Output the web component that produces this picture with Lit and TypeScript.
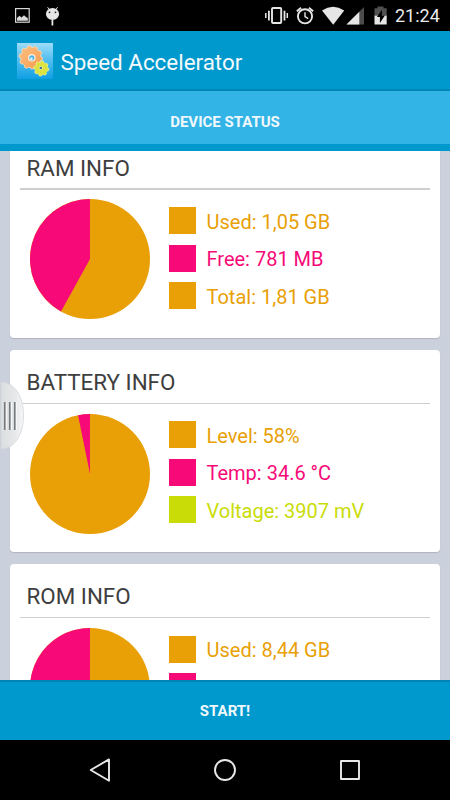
import { LitElement, html, css, svg } from "lit";
import { customElement, property } from "lit/decorators.js";

const ORANGE = "#e99f06";
const PINK = "#f70a78";
const LIME = "#c9dc07";

interface Row { color: string; text: string }
interface Card { title: string; base: string; slice: string; from: number; rows: Row[] }

const CARDS: Card[] = [
  { title: "RAM INFO", base: ORANGE, slice: PINK, from: 208.9, rows: [
    { color: ORANGE, text: "Used: 1,05 GB" },
    { color: PINK, text: "Free: 781 MB" },
    { color: ORANGE, text: "Total: 1,81 GB" } ] },
  { title: "BATTERY INFO", base: ORANGE, slice: PINK, from: 348.5, rows: [
    { color: ORANGE, text: "Level: 58%" },
    { color: PINK, text: "Temp: 34.6 °C" },
    { color: LIME, text: "Voltage: 3907 mV" } ] },
  { title: "ROM INFO", base: ORANGE, slice: PINK, from: 240, rows: [
    { color: ORANGE, text: "Used: 8,44 GB" },
    { color: PINK, text: "Free: 3,99 GB" } ] },
];

@customElement("info-card")
export class InfoCard extends LitElement {
  @property({ attribute: false }) card!: Card;

  static styles = css`
    :host { display: block; height: 202.8px; background: #fff; border-radius: 4px;
      box-shadow: 0 1px 1px rgba(120, 120, 120, .3); box-sizing: border-box; padding: 0 10px; }
    .title { height: 53px; box-sizing: border-box; padding: 15.4px 0 0 6.5px; line-height: 34px;
      font-size: 22.4px; color: #3e3e3e; white-space: nowrap; }
    .rule { height: 1.5px; background: #cfcfcf; }
    .body { display: flex; padding: 9.6px 0 0 10px; }
    .pie { width: 120px; height: 120px; display: block; flex: none; }
    .legend { display: flex; flex-direction: column; gap: 10.4px; padding: 7.7px 0 0 19px; }
    .row { display: flex; align-items: center; height: 27.1px; gap: 10.5px;
      font-size: 20px; line-height: 27px; white-space: nowrap; }
    .label { padding-top: 3px; }
    .swatch { width: 27px; height: 27px; flex: none; }
  `;

  render() {
    const c = this.card;
    const a = (c.from * Math.PI) / 180;
    const x = 60 + 60 * Math.sin(a);
    const y = 60 - 60 * Math.cos(a);
    return html`
      <div class="title">${c.title}</div>
      <div class="rule"></div>
      <div class="body">
        <svg class="pie" viewBox="0 0 120 120">
          <circle cx="60" cy="60" r="60" fill=${c.base} />
          <path d="M60 60L${x} ${y}A60 60 0 0 1 60 0Z" fill=${c.slice} />
        </svg>
        <div class="legend">
          ${c.rows.map((r) => html`<div class="row" style="color:${r.color}">
            <div class="swatch" style="background:${r.color}"></div><span class="label">${r.text}</span></div>`)}
        </div>
      </div>`;
  }
}

function gear(cx: number, cy: number, r: number, n: number, tooth: number) {
  const pts: string[] = [];
  const step = (Math.PI * 2) / n;
  const at = (rad: number, a: number) => `${(cx + rad * Math.cos(a)).toFixed(2)} ${(cy + rad * Math.sin(a)).toFixed(2)}`;
  for (let i = 0; i < n; i++) {
    const a = i * step + 0.15;
    pts.push(at(r, a - step * 0.3), at(r + tooth, a - step * 0.2), at(r + tooth, a + step * 0.2), at(r, a + step * 0.3));
  }
  return "M" + pts.join("L") + "Z";
}

@customElement("app-root")
export class AppRoot extends LitElement {
  static styles = css`
    :host { display: flex; flex-direction: column; position: relative; width: 450px; height: 800px;
      overflow: hidden; font-family: Roboto, "Noto Sans", sans-serif; background: #000; }
    svg { display: block; flex: none; }
    .status { height: 31px; flex: none; background: #000; display: flex; }
    .clock { color: #ececec; font-size: 18px; line-height: 32px; margin-left: 4px; white-space: nowrap; }
    .bar { height: 60px; flex: none; box-sizing: border-box; background: #0099cd; display: flex; align-items: center;
      padding: 1px 0 0 17px; gap: 7.5px; border-bottom: 2px solid #0087b5; color: #f5fafc;
      font-size: 22.4px; white-space: nowrap; }
    .app-title { line-height: 30px; padding-top: 2px; }
    .tab { height: 60px; flex: none; box-sizing: border-box; background: #33b4e6; border-bottom: 7px solid #0099cd;
      color: #f0f8fc; font-size: 15px; font-weight: 700; text-align: center; line-height: 63px; }
    .list { height: 529px; flex: none; overflow: hidden; background: #cbd0dd; }
    .cards { display: flex; flex-direction: column; gap: 11.4px; margin: -15.7px 10px 0; }
    .start { height: 60px; flex: none; box-sizing: border-box; background: #0099cd; border-top: 2px solid #0083b5;
      color: #f0f8fc; font-size: 15px; font-weight: 700; text-align: center; line-height: 58px; }
    .nav { height: 60px; flex: none; background: #000; }
    .handle { position: absolute; left: 0; top: 381px; }
  `;

  render() {
    const big = gear(13.8, 14.4, 10.2, 10, 1.5);
    const small = gear(24.3, 25.5, 6.4, 8, 1.2);
    return html`
      <div class="status">
        <svg width="391" height="31" viewBox="0 0 391 31">
          <rect x="15.6" y="8.6" width="13.6" height="13.6" fill="none" stroke="#d8d8d8" stroke-width="1.2" />
          <path d="M17 20.7V18l2.5-2.2 2 1.6 2.5-2.2 2 1.8 1.8 1v2.7z" fill="#d8d8d8" />
          <path d="M47.6 7.2l2.2 3M57.6 7.2l-2.2 3" stroke="#e6e6e6" stroke-width="1" />
          <ellipse cx="52.5" cy="14" rx="6.6" ry="6" fill="#e6e6e6" />
          <circle cx="49.5" cy="12.3" r=".9" fill="#222" /><circle cx="55.5" cy="12.3" r=".9" fill="#222" />
          <path d="M52.4 20v5.5" stroke="#e6e6e6" stroke-width="1.8" />
          <g fill="none" stroke="#e6e6e6">
            <rect x="272" y="8" width="9.2" height="15" rx="1" stroke-width="1.9" />
            <path d="M268.9 10.8v9.6M284.5 10.8v9.6" stroke-width="1.8" />
            <path d="M265.8 13v5M287.3 13v5" stroke-width="1.5" />
            <circle cx="305" cy="16.3" r="7.1" stroke-width="1.9" />
            <path d="M305 12.2v4.5l3.2 2" stroke-width="1.4" />
            <path d="M296.8 11.2l4.3-3.5M313.2 11.2l-4.3-3.5" stroke-width="1.8" />
          </g>
          <path d="M322 10.5Q333 3.2 344.2 10.5L333.2 24.7z" fill="#e6e6e6" />
          <path d="M346.5 24.5H364V7z" fill="#4c4c4c" />
          <path d="M346.5 24.5H359.3V11.7z" fill="#e6e6e6" />
          <path d="M374.5 8.3h3V6.6h6v1.7h3.2v8H374.5z" fill="#505050" />
          <path d="M374.5 15.7h12.2V24.5H374.5z" fill="#e6e6e6" />
          <path d="M381.9 9.8l-5 7.2h3v6l5-7.4h-3z" fill="#000" />
        </svg>
        <div class="clock">21:24</div>
      </div>
      <div class="bar">
        <svg width="36" height="36" viewBox="0 0 36 36">
          <defs>
            <linearGradient id="sky" x1="0" y1="0" x2="0" y2="1"><stop offset="0" stop-color="#9ddcf8" /><stop offset=".45" stop-color="#55bff0" /><stop offset="1" stop-color="#0f9fe4" /></linearGradient>
            <linearGradient id="og" x1="0" y1="0" x2="1" y2="1"><stop offset="0" stop-color="#fdc184" /><stop offset="1" stop-color="#f59a4c" /></linearGradient>
          </defs>
          <rect width="36" height="36" fill="url(#sky)" />
          ${svg`<path d=${big} fill="url(#og)" stroke="#fde0b8" stroke-width=".8" stroke-linejoin="round" />`}
          <circle cx="14.8" cy="14.8" r="3.8" fill="#fff0dc" /><circle cx="14.8" cy="14.8" r="2.6" fill="#52b4e4" />
          <circle cx="14.4" cy="15.8" r="1.4" fill="#d7f0fa" />
          ${svg`<path d=${small} fill="#dce33e" stroke="#f1f297" stroke-width=".7" stroke-linejoin="round" />`}
          <circle cx="23.8" cy="25" r="2" fill="#f3f5b0" /><circle cx="23.8" cy="25" r="1.3" fill="#37718c" />
        </svg>
        <div class="app-title">Speed Accelerator</div>
      </div>
      <div class="tab">DEVICE STATUS</div>
      <div class="list"><div class="cards">${CARDS.map((c) => html`<info-card .card=${c}></info-card>`)}</div></div>
      <div class="start">START!</div>
      <div class="nav">
        <svg width="450" height="60" viewBox="0 0 450 60" fill="none" stroke="#e8e8e8" stroke-width="1.9" stroke-linejoin="round">
          <path d="M90.7 30L109 19.4V40.7z" />
          <circle cx="225" cy="30" r="10" />
          <rect x="341" y="21" width="18" height="18" />
        </svg>
      </div>
      <svg class="handle" width="26" height="70" viewBox="0 0 26 70">
        <defs><linearGradient id="grip"><stop offset="0" stop-color="#dcdee1" /><stop offset=".6" stop-color="#e6e7e9" /><stop offset="1" stop-color="#f7f7f8" /></linearGradient></defs>
        <path d="M1 1C14 1 23.5 15 23.5 34.5S14 68 1 68z" fill="url(#grip)" stroke="#d3d5d9" stroke-width=".8" />
        <path d="M4.8 21v28M9.8 21v28M14.8 21v28" stroke="#76797d" stroke-width="1.8" />
        <path d="M6.3 21v28M11.3 21v28M16.3 21v28" stroke="#fff" stroke-width=".8" />
      </svg>`;
  }
}
